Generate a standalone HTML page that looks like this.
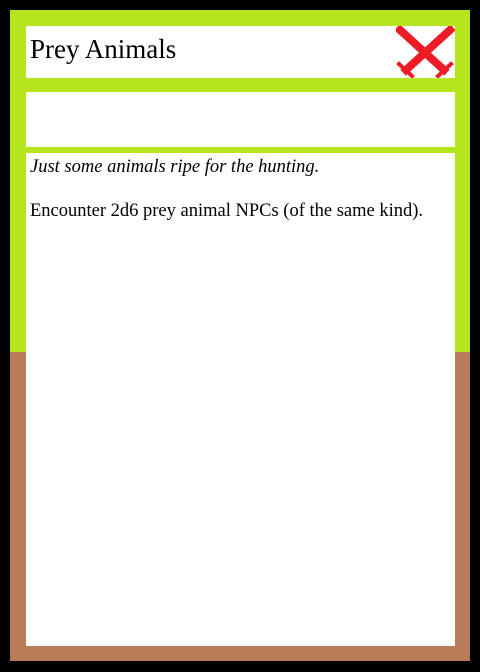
<!DOCTYPE html>
<html><head><style>
body{margin:0;width:480px;height:672px;background:#000;position:relative;overflow:hidden;font-family:"Liberation Serif","Times New Roman",serif;}
.g{position:absolute;left:10px;top:10px;width:460px;height:342px;background:#b5e61d;}
.b{position:absolute;left:10px;top:352px;width:460px;height:309px;background:#b97a57;}
.w{position:absolute;left:26px;width:429px;background:#fff;}
</style></head><body>
<div class="g"></div><div class="b"></div>
<div class="w" style="top:26px;height:52px;"><div style="position:absolute;left:4px;top:8px;font-size:27px;">Prey Animals</div>
<svg style="position:absolute;left:370px;top:0" width="59" height="52" viewBox="0 0 59 52">
<g stroke="#ed1c24" stroke-linecap="square" fill="none">
<line x1="4" y1="4" x2="48" y2="44" stroke-width="8"/>
<line x1="54" y1="4" x2="10" y2="44" stroke-width="8"/>
<line x1="3" y1="38" x2="16" y2="50" stroke-width="4"/>
<line x1="55" y1="38" x2="42" y2="50" stroke-width="4"/>
</g></svg></div>
<div class="w" style="top:92px;height:55px;"></div>
<div class="w" style="top:153px;height:493px;font-size:18.5px;">
<div style="position:absolute;left:4px;top:4px;font-style:italic;">Just some animals ripe for the hunting.</div>
<div style="position:absolute;left:4px;top:48px;">Encounter 2d6 prey animal NPCs (of the same kind).</div>
</div>
</body></html>
